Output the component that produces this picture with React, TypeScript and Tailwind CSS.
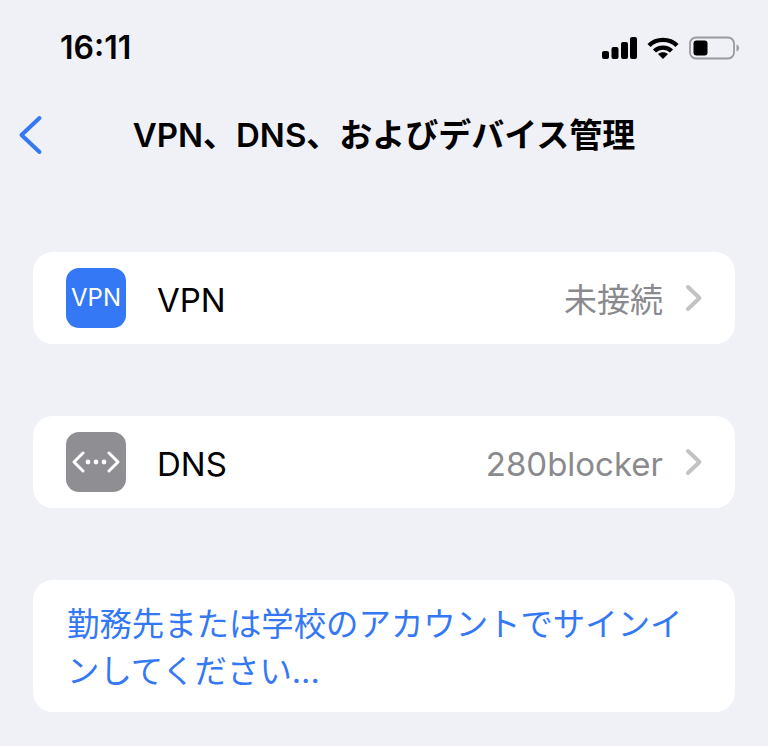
import React from 'react'

const font = { fontFamily: 'Inter, "Noto Sans CJK JP", sans-serif' }

function Chevron() {
  return (
    <svg width="18" height="28" viewBox="0 0 18 28" fill="none" className="ml-[22px]">
      <path d="M3 3l11.500 11L3 25" stroke="#c3c3c6" strokeWidth="4" strokeLinecap="round" strokeLinejoin="round" />
    </svg>
  )
}

function Row({ icon, label, value, valueClass }: { icon: React.ReactNode; label: string; value: string; valueClass: string }) {
  return (
    <div className="h-[92px] rounded-[20px] bg-white flex items-center pl-[33px] pr-[32px]">
      {icon}
      <span className="ml-[31px] pt-[5px] text-[33px] text-black">{label}</span>
      <span className={`ml-auto pt-[5px] text-[#8a8a8e] ${valueClass}`}>{value}</span>
      <Chevron />
    </div>
  )
}

export default function App() {
  return (
    <div className="w-[768px] h-[746px] bg-[#f0f1f6] overflow-hidden" style={font}>
      {/* status bar */}
      <div className="h-[88px] pl-[60px] pr-[29px] pt-[27px] flex items-start justify-between">
        <span className="text-[32px] leading-[42px] font-semibold text-black">16:11</span>
        <div className="flex items-center gap-[10px] pt-[9px]">
          <svg width="35" height="22" viewBox="0 0 35 22" fill="#000">
            <rect x="0" y="14" width="7" height="8" rx="2" />
            <rect x="9.500" y="10" width="7" height="12" rx="2" />
            <rect x="19" y="5" width="7" height="17" rx="2" />
            <rect x="28" y="0" width="7" height="22" rx="2" />
          </svg>
          <svg width="32" height="22" viewBox="0 0 32 22" fill="none" stroke="#000" strokeWidth="4.400">
            <path d="M2 8.500C9.500 1 22.500 1 30 8.500" />
            <path d="M7.500 14C12 9.500 20 9.500 24.500 14" />
            <path d="M16 22l-5-5c2.800-2.500 7.200-2.500 10 0z" fill="#000" stroke="none" />
          </svg>
          <svg width="50" height="24" viewBox="0 0 50 24" fill="none">
            <rect x="1" y="1.500" width="44" height="21" rx="6" stroke="#9a9a9e" strokeWidth="1.800" />
            <rect x="4.500" y="4.500" width="14" height="15" rx="3" fill="#000" />
            <path d="M47.500 8.500c1.800.6 2.500 2 2.500 3.500s-.7 2.900-2.500 3.500z" fill="#9a9a9e" />
          </svg>
        </div>
      </div>

      {/* nav bar */}
      <div className="h-[92px] relative flex items-center justify-center">
        <svg width="26" height="40" viewBox="0 0 26 40" fill="none" className="absolute left-[18px] top-[27px]">
          <path d="M21.500 3L3.500 20l18 17" stroke="#3478f6" strokeWidth="4" strokeLinecap="round" strokeLinejoin="round" />
        </svg>
        <span className="text-[33px] font-semibold text-black pt-[4px] whitespace-nowrap">VPN、DNS、およびデバイス管理</span>
      </div>

      <div className="px-[33px] pt-[72px] flex flex-col gap-[72px]">
        <Row
          label="VPN"
          value="未接続"
          valueClass="text-[33px]"
          icon={
            <div className="w-[60px] h-[60px] rounded-[13px] bg-[#3478f6] flex items-center justify-center text-white text-[24px]">
              VPN
            </div>
          }
        />
        <Row
          label="DNS"
          value="280blocker"
          valueClass="text-[33px]"
          icon={
            <div className="w-[60px] h-[60px] rounded-[13px] bg-[#8e8e93] flex items-center justify-center">
              <svg width="48" height="24" viewBox="0 0 48 24" fill="none" stroke="#fff" strokeWidth="3" strokeLinecap="round" strokeLinejoin="round">
                <path d="M11 3L2 12l9 9" />
                <path d="M37 3l9 9-9 9" />
                <circle cx="16" cy="12" r="2.400" fill="#fff" stroke="none" />
                <circle cx="24" cy="12" r="2.400" fill="#fff" stroke="none" />
                <circle cx="32" cy="12" r="2.400" fill="#fff" stroke="none" />
              </svg>
            </div>
          }
        />
        <div className="h-[132px] rounded-[20px] bg-white px-[34px] pt-[21px] text-[32.400px] leading-[47px] text-[#3478f6]">
          <p>勤務先または学校のアカウントでサインインしてください...</p>
        </div>
      </div>
    </div>
  )
}
